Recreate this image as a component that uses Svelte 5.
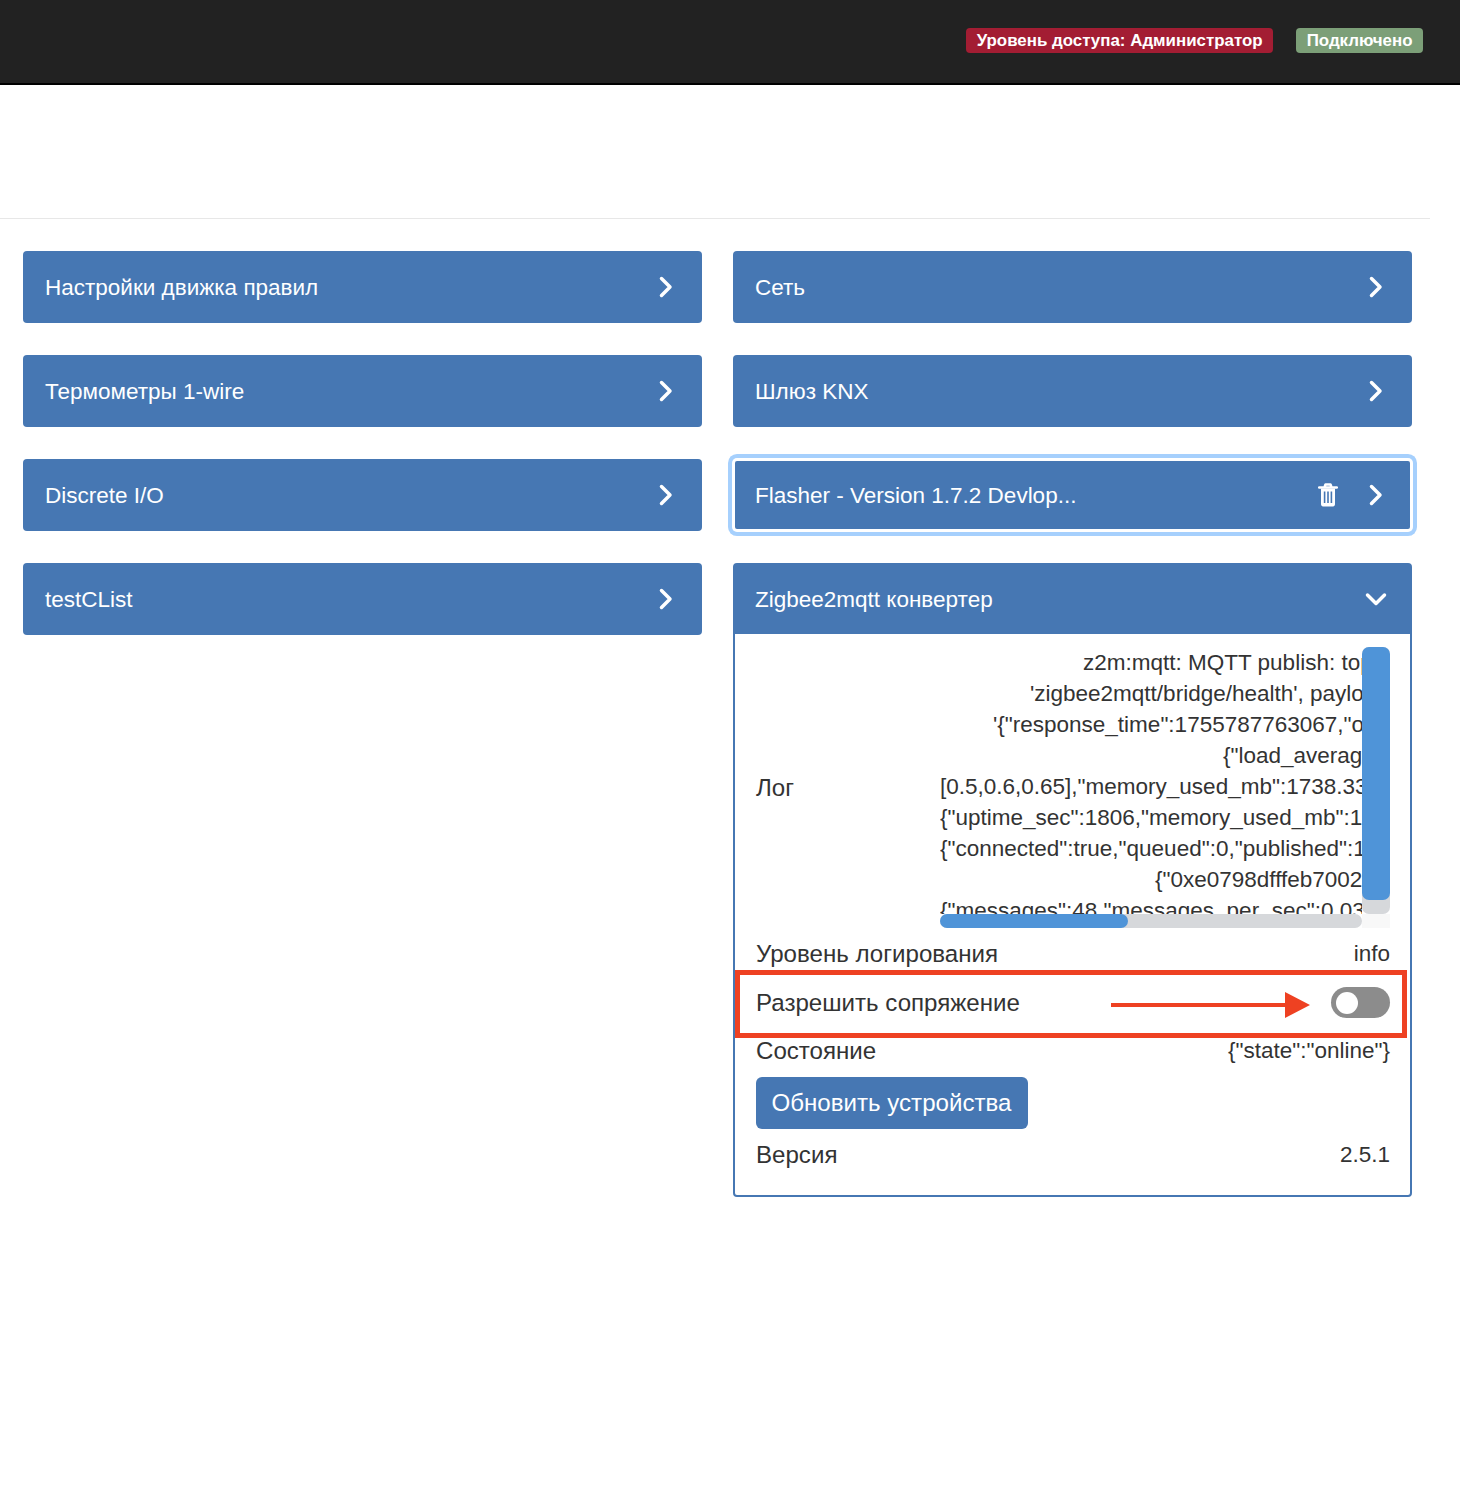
<script>
	const leftCards = ['Настройки движка правил', 'Термометры 1-wire', 'Discrete I/O', 'testCList'];

	// start of each visible log line inside the scrolled box (text is right aligned in the original)
	const logLines = [
		{ indent: 143, text: 'z2m:mqtt: MQTT publish: topic' },
		{ indent: 90, text: "'zigbee2mqtt/bridge/health', payload" },
		{ indent: 53, text: `'{"response_time":1755787763067,"os":` },
		{ indent: 283, text: '{"load_average":' },
		{ indent: 0, text: '[0.5,0.6,0.65],"memory_used_mb":1738.33},"process":' },
		{ indent: 0, text: '{"uptime_sec":1806,"memory_used_mb":172.5},"mqtt":' },
		{ indent: 0, text: '{"connected":true,"queued":0,"published":1240' },
		{ indent: 215, text: '{"0xe0798dfffeb70020":' },
		{ indent: 0, text: '{"messages":48,"messages_per_sec":0.03' }
	];
</script>

{#snippet chevronRight()}
	<svg class="chevron" width="14" height="22" viewBox="0 0 14 22" aria-hidden="true">
		<path d="M2.5 2.5 11 11 2.5 19.5" />
	</svg>
{/snippet}

<div class="page">
	<header class="navbar">
		<span class="badge danger">Уровень доступа: Администратор</span>
		<span class="badge success">Подключено</span>
	</header>

	<div class="content">
		<div class="title-bar"></div>

		<div class="grid">
			<div class="card"><div class="card-head"><span>{leftCards[0]}</span>{@render chevronRight()}</div></div>
			<div class="card"><div class="card-head"><span>Сеть</span>{@render chevronRight()}</div></div>

			<div class="card"><div class="card-head"><span>{leftCards[1]}</span>{@render chevronRight()}</div></div>
			<div class="card"><div class="card-head"><span>Шлюз KNX</span>{@render chevronRight()}</div></div>

			<div class="card"><div class="card-head"><span>{leftCards[2]}</span>{@render chevronRight()}</div></div>
			<div class="card focused">
				<div class="card-head">
					<span>Flasher - Version 1.7.2 Devlop...</span>
					<svg class="trash" width="20" height="24" viewBox="0 0 20 24" aria-hidden="true">
						<path class="lid" d="M1.2 4.5h17.600M6.500 4.200l1-2.700h5l1 2.700" />
						<path class="bin" d="M3 5.500v15.500c0 1.300.8 2.500 2 2.500h10c1.200 0 2-1.200 2-2.500V5.500z" />
						<path class="slit" d="M6.600 8.500v11.500M10 8.500v11.500M13.400 8.500v11.500" />
					</svg>
					{@render chevronRight()}
				</div>
			</div>

			<div class="card"><div class="card-head"><span>{leftCards[3]}</span>{@render chevronRight()}</div></div>
			<div class="card open">
				<div class="card-head">
					<span>Zigbee2mqtt конвертер</span>
					<svg class="chevron down" width="22" height="14" viewBox="0 0 22 14" aria-hidden="true">
						<path d="M2.500 3 11 11.500 19.500 3" />
					</svg>
				</div>
				<div class="card-body">
					<div class="row">
						<span class="label">Лог</span>
						<div class="log">
							<div class="log-view">
								<div class="log-inner">
									{#each logLines as line}
										<div style="margin-left: {line.indent}px">{line.text}</div>
									{/each}
								</div>
							</div>
							<div class="vbar"><div class="vthumb"></div></div>
							<div class="hbar"><div class="hthumb"></div></div>
							<div class="corner"></div>
						</div>
					</div>
					<div class="row">
						<span class="label raised">Уровень логирования</span>
						<span class="raised">info</span>
					</div>
					<div class="row pairing">
						<span class="label">Разрешить сопряжение</span>
						<span class="toggle"><span class="knob"></span></span>
						<div class="mark"></div>
						<svg class="arrow" width="200" height="26" viewBox="0 0 200 26" aria-hidden="true">
							<path d="M0 11h174V0l25 13-25 13V15H0z" />
						</svg>
					</div>
					<div class="row">
						<span class="label raised">Состояние</span>
						<span class="raised">{'{"state":"online"}'}</span>
					</div>
					<div class="row">
						<button class="btn">Обновить устройства</button>
					</div>
					<div class="row">
						<span class="label raised">Версия</span>
						<span class="raised">2.5.1</span>
					</div>
				</div>
			</div>
		</div>
	</div>
</div>

<style>
	:global(body) { background: #fff; }
	.page { font-family: "Liberation Sans", Arial, sans-serif; color: #333; font-size: 22.5px; line-height: 31px; min-height: 1500px; }
	.navbar { height: 83px; background: #222; border-bottom: 2px solid #000; display: flex; justify-content: flex-end; align-items: center; gap: 23px; padding-right: 37px; }
	.badge { height: 25px; line-height: 25px; padding: 0 10.5px; border-radius: 4px; color: #fff; font-size: 16.9px; font-weight: 700; margin-top: -2px; }
	.danger { background: #a31d33; }
	.success { background: #7c9f78; }
	.content { width: 1430px; }
	.title-bar { height: 133px; border-bottom: 1px solid #e7e7e7; }
	.grid { display: grid; grid-template-columns: 679px 679px; column-gap: 31px; row-gap: 32px; padding: 32px 18px 0 23px; align-items: start; }
	.card { border-radius: 4px; background: #4677b3; }
	.card-head { height: 72px; display: flex; align-items: center; padding: 0 29px 0 22px; color: #fff; }
	.card-head span { flex: 1; }
	.chevron { fill: none; stroke: #fff; stroke-width: 3.5; stroke-linecap: round; stroke-linejoin: round; }
	.chevron.down { margin-right: -4px; }
	.focused { border: 2px solid #fff; box-shadow: 0 0 0 1px #fff, 0 0 0 5px #a6d0fd; }
	.focused .card-head { height: 68px; padding: 0 27px 0 20px; }
	.trash { margin-right: 31px; }
	.lid { fill: none; stroke: #fff; stroke-width: 2.5; stroke-linecap: round; stroke-linejoin: round; }
	.bin { fill: #fff; }
	.slit { fill: none; stroke: #4677b3; stroke-width: 1.6; }
	.open { background: #fff; border: 2px solid #4677b3; box-sizing: border-box; }
	.open .card-head { background: #4677b3; height: 69px; padding: 0 27px 1px 20px; box-sizing: border-box; }
	.card-body { display: flex; flex-direction: column; gap: 10.5px; padding: 13px 20px 24px 21px; }
	.row { display: flex; justify-content: space-between; align-items: center; position: relative; }
	.label { font-size: 24.1px; }
	.raised { line-height: 29px; padding-bottom: 2px; }
	.log { display: grid; grid-template-columns: 422px 28px; grid-template-rows: 267px 14px; }
	.log-view { overflow: hidden; }
	.log-inner { width: 947px; white-space: nowrap; }
	.vbar { background: #d6d8db; border-radius: 7px; }
	.vthumb { height: 253px; background: #4f94d8; border-radius: 7px; }
	.hbar { background: #d6d8db; border-radius: 7px; }
	.hthumb { width: 188px; height: 14px; background: #4f94d8; border-radius: 7px; }
	.corner { background: #f8f8f8; }
	.pairing { padding: 7px 0; }
	.toggle { width: 59px; height: 31px; border-radius: 16px; background: #8c8c8c; display: flex; align-items: center; padding-left: 5px; box-sizing: border-box; }
	.knob { flex: none; width: 22px; height: 22px; border-radius: 50%; background: #fff; }
	.mark { position: absolute; left: -21px; right: -17px; top: -10.5px; bottom: -12.5px; border: 5px solid #ee4122; }
	.arrow { position: absolute; left: 355px; top: 12px; fill: #ee4122; }
	.btn { height: 52px; padding: 0 16.5px 2px 15.5px; border: 0; border-radius: 6px; background: #4677b3; color: #fff; font: inherit; font-size: 24.1px; }
</style>
